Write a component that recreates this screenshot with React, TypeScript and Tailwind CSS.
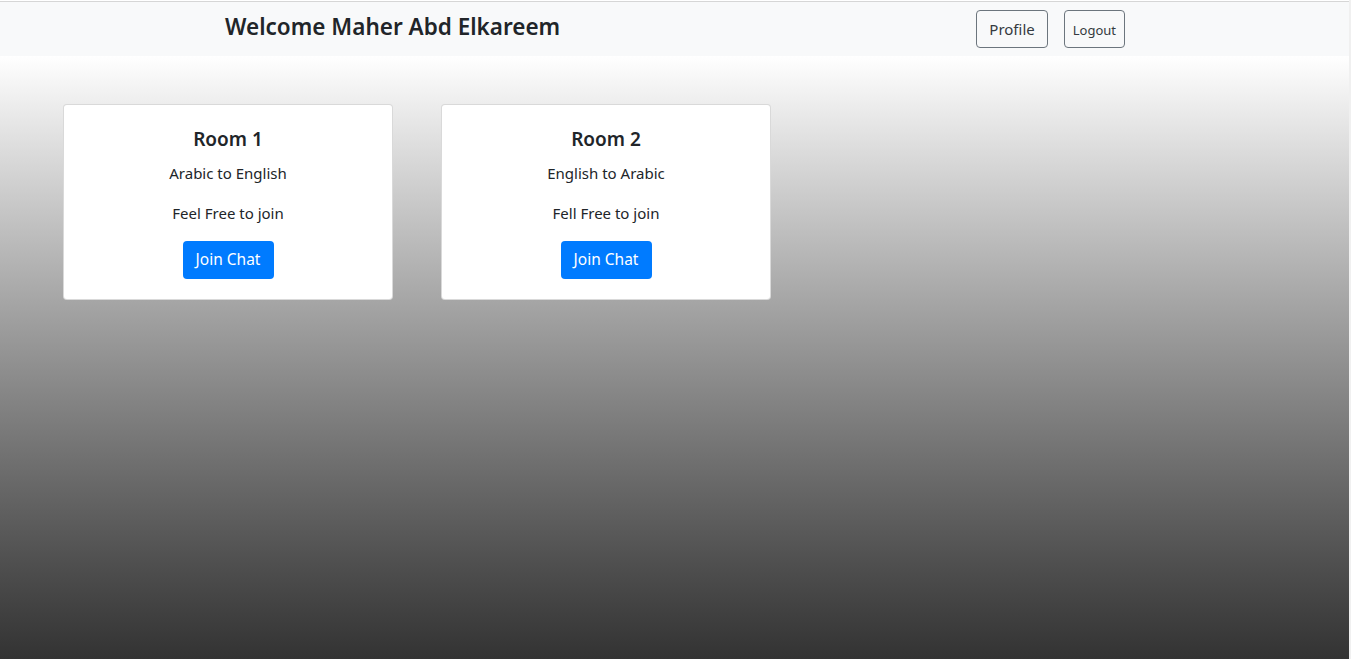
import React from "react";

const rooms = [
  { title: "Room 1", direction: "Arabic to English", note: "Feel Free to join" },
  { title: "Room 2", direction: "English to Arabic", note: "Fell Free to join" },
];

const App = () => {
  return (
    <div className="flex h-[659px] flex-col overflow-hidden border-r-2 border-[#f0f0f0] bg-white font-['Noto_Sans',sans-serif] text-[#212529]">
      <nav className="mt-px flex h-[55px] items-center border-t border-[#d6d6d6] bg-[#f8f9fa] pl-[225px] pr-[224px]">
        <h3 className="-mt-[3px] text-[22.5px] font-semibold leading-none">Welcome Maher Abd Elkareem</h3>
        <div className="ml-auto flex gap-4">
          <button className="h-[38px] rounded border border-[#6c757d] px-3 text-[15px] text-[#343a40]">
            Profile
          </button>
          <button className="h-[38px] rounded border border-[#6c757d] px-2 pt-[3px] text-[13px] text-[#343a40]">
            Logout
          </button>
        </div>
      </nav>

      <main className="flex flex-1 items-start gap-[48px] bg-gradient-to-b from-white to-[#333333] pl-[63px] pt-[48px]">
        {rooms.map((room, index) => (
          <div
            key={index}
            className="flex h-[196px] w-[330px] flex-col items-center rounded border border-black/15 bg-white pt-[22px]"
          >
            <h5 className="text-[19px] font-semibold leading-6">{room.title}</h5>
            <p className="mt-[10px] text-[15px] leading-6">{room.direction}</p>
            <p className="mt-4 text-[15px] leading-6">{room.note}</p>
            <button className="mt-[16px] h-[38px] w-[91px] rounded bg-[#007bff] text-[15.5px] text-white">
              Join Chat
            </button>
          </div>
        ))}
      </main>
    </div>
  );
};

export default App;
